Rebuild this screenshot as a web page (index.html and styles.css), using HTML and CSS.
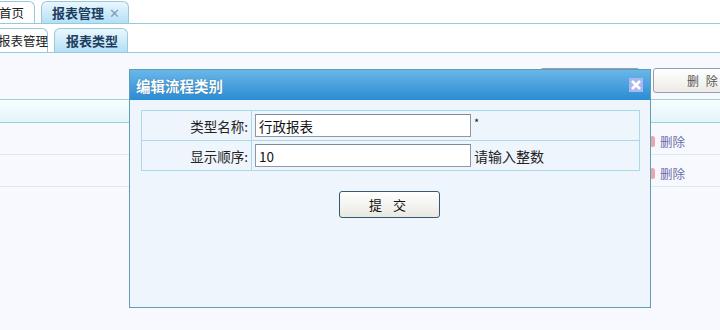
FILE: index.html
```html
<!DOCTYPE html>
<html lang="zh-CN">
<head>
    <meta charset="UTF-8">
    <title>报表类型</title>
    <link rel="stylesheet" href="styles.css">
</head>
<body>
    <div class="tabbar top-tabs">
        <div class="tab">首页</div>
        <div class="tab active">报表管理 <span class="tab-close">✕</span></div>
    </div>
    <div class="tabbar sub-tabs">
        <div class="tab">报表管理</div>
        <div class="tab active">报表类型</div>
    </div>

    <div class="toolbar">
        <button class="btn btn-wide">添 加</button>
        <button class="btn">删 除</button>
    </div>

    <div class="grid">
        <div class="grid-head"></div>
        <div class="grid-row"><span class="row-del"><i class="del-icon"></i>删除</span></div>
        <div class="grid-row"><span class="row-del"><i class="del-icon"></i>删除</span></div>
    </div>

    <!-- modal dialog -->
    <div class="dialog">
        <div class="dialog-title">
            <span>编辑流程类别</span>
            <span class="dialog-close">
                <svg width="14" height="14" viewBox="0 0 14 14"><path d="M3 3 L11 11 M11 3 L3 11" stroke="#fff" stroke-width="2.6"/></svg>
            </span>
        </div>
        <div class="dialog-body">
            <table class="form-table">
                <tr>
                    <td class="label">类型名称:</td>
                    <td class="field"><input type="text" value="行政报表"> <span class="req">*</span></td>
                </tr>
                <tr>
                    <td class="label">显示顺序:</td>
                    <td class="field"><input type="text" value="10"> <span class="hint">请输入整数</span></td>
                </tr>
            </table>
            <div class="actions">
                <button class="submit">提 交</button>
            </div>
        </div>
    </div>
</body>
</html>
```

FILE: styles.css
```css
body {
    margin: 0;
    background-color: #f7f9fe;
    font-family: "Noto Sans CJK SC", "DejaVu Sans", sans-serif;
    font-size: 12px;
    color: #222;
    overflow: hidden;
}
.tabbar {
    display: flex;
    align-items: flex-end;
    background-color: #fff;
    border-bottom: 1px solid #93cbdc;
}
.top-tabs {
    height: 23px;
}
.sub-tabs {
    height: 28px;
}
.tab {
    box-sizing: border-box;
    border: 1px solid #9cc9da;
    border-bottom: none;
    border-radius: 0 6px 0 0;
    background-color: #fff;
    color: #222;
    font-size: 12.5px;
    display: flex;
    align-items: center;
    white-space: nowrap;
    flex-shrink: 0;
}
.top-tabs .tab {
    height: 22px;
    width: 69px;
    margin-left: -34px;
    padding-left: 32px;
}
.top-tabs .tab.active {
    width: 88px;
    margin-left: 6px;
    padding-left: 10px;
    font-size: 13px;
}
.sub-tabs .tab {
    height: 24px;
    width: 58px;
    margin-left: -10px;
    padding-left: 7px;
}
.sub-tabs .tab.active {
    width: 74px;
    margin-left: 6px;
    padding-left: 11px;
    font-size: 13px;
}
.tab.active {
    border-radius: 6px 6px 0 0;
    background: linear-gradient(#eaf7fd, #b3e0f5);
    font-weight: bold;
    color: #1d3e5e;
}
.tab-close {
    margin-left: 5px;
    color: #7f9fb8;
    font-size: 13px;
    font-weight: bold;
}

.toolbar {
    height: 47px;
    display: flex;
    justify-content: flex-end;
    align-items: flex-start;
    gap: 13px;
    padding-top: 15px;
    box-sizing: border-box;
    margin-right: -12px;
    border-bottom: 1px solid #9dcfdc;
}
.btn {
    width: 79px;
    height: 25px;
    border: 1px solid #8fa2b0;
    border-radius: 3px;
    background: linear-gradient(#ffffff, #ecebe6);
    font-family: inherit;
    font-size: 12px;
    color: #555;
    letter-spacing: 2px;
    padding-left: 33px;
    text-align: left;
    white-space: nowrap;
}
.btn-wide {
    width: 100px;
}

.grid-head {
    height: 22px;
    background: linear-gradient(#f8fdff, #e2f5fa);
    border-bottom: 1px solid #9dcfdc;
}
.grid-row {
    border-bottom: 1px solid #d8eaee;
    display: flex;
    align-items: center;
    padding-left: 650px;
    padding-top: 5px;
    box-sizing: border-box;
    height: 32px;
}
.row-del {
    color: #6a69a8;
    font-size: 12.5px;
    display: flex;
    align-items: center;
}
.del-icon {
    display: inline-block;
    width: 5px;
    height: 11px;
    margin-right: 5px;
    border-radius: 3px;
    background-color: #e8a7ae;
}

.dialog {
    position: absolute;
    left: 129px;
    top: 69px;
    width: 520px;
    height: 237px;
    border: 1px solid #5e9eae;
    background-color: #eff5fd;
}
.dialog-title {
    height: 30px;
    background: linear-gradient(#6ab7e9, #2b8bd3);
    color: #fff;
    font-size: 14.5px;
    font-weight: bold;
    display: flex;
    align-items: center;
    justify-content: space-between;
    padding: 0 7px 0 6px;
    text-shadow: 0 0 1px #1a5a8a;
}
.dialog-close {
    width: 14px;
    height: 14px;
    background-color: #a9b8f0;
    display: flex;
}
.dialog-body {
    padding: 10px 11px 0 11px;
}
.form-table {
    width: 499px;
    border-collapse: collapse;
}
.form-table td {
    border: 1px solid #aad8e5;
    height: 29px;
    padding: 0;
}
.form-table .label {
    width: 106px;
    text-align: right;
    padding-right: 3px;
    font-size: 13.5px;
    color: #222;
}
.form-table .field {
    padding-left: 3px;
    font-size: 13.5px;
}
.form-table input {
    box-sizing: border-box;
    width: 216px;
    height: 23px;
    border: 1px solid #8a9aa4;
    border-top-color: #7d8e98;
    font-family: inherit;
    font-size: 13.5px;
    padding: 0 3px;
    vertical-align: middle;
    color: #111;
}
.req {
    vertical-align: top;
    font-size: 11px;
}
.hint {
    font-size: 14px;
    vertical-align: middle;
}
.actions {
    display: flex;
    justify-content: center;
    padding-top: 20px;
    padding-right: 1px;
}
.submit {
    width: 101px;
    height: 27px;
    border: 1px solid #355a70;
    border-radius: 3px;
    background: linear-gradient(#ffffff, #e9e8e2);
    font-family: inherit;
    font-size: 13px;
    letter-spacing: 4px;
    color: #111;
}
```
